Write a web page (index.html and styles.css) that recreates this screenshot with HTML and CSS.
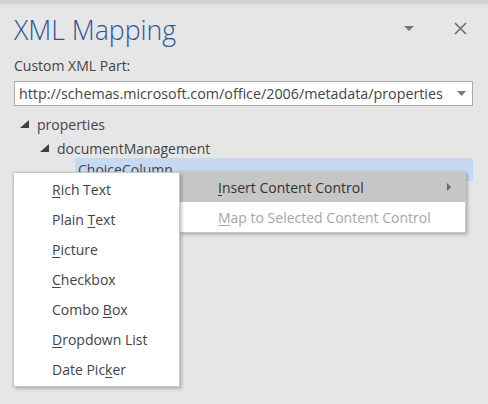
FILE: index.html
```html
<!DOCTYPE html>
<html>
<head>
<meta charset="utf-8">
<link rel="stylesheet" href="styles.css">
</head>
<body>
<div class="pane">
  <div class="topshade"></div>
  <div class="header">
    <h1 class="title">XML Mapping</h1>
    <div class="header-icons">
      <svg class="icon-menu" width="10" height="6" viewBox="0 0 10 6"><path d="M0 0H10L5 5Z" fill="#7a7a7a"/></svg>
      <svg class="icon-close" width="13" height="13" viewBox="0 0 13 13"><path d="M1 1L12 12M12 1L1 12" stroke="#6b6b6b" stroke-width="1.5"/></svg>
    </div>
  </div>
  <div class="label">Custom XML Part:</div>
  <div class="select">
    <span class="select-text">http://schemas.microsoft.com/office/2006/metadata/properties</span>
    <svg class="select-arrow" width="9" height="5" viewBox="0 0 9 5"><path d="M0 0H9L4.5 5Z" fill="#7a7a7a"/></svg>
  </div>
  <ul class="tree">
    <li class="node lvl0"><svg class="twisty" width="9" height="8" viewBox="0 0 9 8"><path d="M9 0V8H0Z" fill="#404040"/></svg><span>properties</span></li>
    <li class="node lvl1"><svg class="twisty" width="9" height="8" viewBox="0 0 9 8"><path d="M9 0V8H0Z" fill="#404040"/></svg><span>documentManagement</span></li>
    <li class="node lvl2 selected"><span>ChoiceColumn</span></li>
  </ul>

  <div class="menu main-menu">
    <div class="item hot"><span><u>I</u>nsert Content Control</span><svg class="sub-arrow" width="4" height="8" viewBox="0 0 4 8"><path d="M0 0L4 4L0 8Z" fill="#666"/></svg></div>
    <div class="item disabled"><span><u>M</u>ap to Selected Content Control</span></div>
  </div>

  <div class="menu sub-menu">
    <div class="item"><span><u>R</u>ich Text</span></div>
    <div class="item"><span>Plain <u>T</u>ext</span></div>
    <div class="item"><span><u>P</u>icture</span></div>
    <div class="item"><span><u>C</u>heckbox</span></div>
    <div class="item"><span>Combo <u>B</u>ox</span></div>
    <div class="item"><span><u>D</u>ropdown List</span></div>
    <div class="item"><span>Date Pic<u>k</u>er</span></div>
  </div>
</div>
</body>
</html>
```

FILE: styles.css
```css
* { box-sizing: border-box; }
html, body {
  margin: 0;
  padding: 0;
  width: 488px;
  height: 404px;
  overflow: hidden;
  background: #e6e6e6;
  font-family: "Open Sans", "Noto Sans", sans-serif;
  color: #444;
}
.pane {
  position: relative;
  width: 488px;
  height: 404px;
  padding: 0 15px 0 14px;
}
.topshade {
  position: absolute;
  left: 0; top: 0; right: 0;
  height: 7px;
  background: linear-gradient(#d6d6d6 0px, #cdcdcd 2px, #dcdcdc 4px, #e6e6e6 7px);
}
.header {
  display: flex;
  align-items: flex-start;
  justify-content: space-between;
  padding-top: 12px;
  height: 56px;
}
.title {
  margin: 0;
  font-family: "Open Sans", sans-serif;
  font-weight: 300;
  font-size: 26.6px;
  line-height: 36px;
  color: #2b579a;
}
.header-icons {
  display: flex;
  align-items: center;
  gap: 40px;
  padding-top: 10px;
  padding-right: 6px;
}
.icon-menu { margin-top: 1px; }
.label {
  font-size: 14px;
  line-height: 20px;
  color: #444;
  height: 25px;
}
.select {
  display: flex;
  align-items: center;
  justify-content: space-between;
  width: 459px;
  height: 25px;
  background: #fff;
  border: 1px solid #ababab;
  padding: 0 6px 0 4px;
  font-size: 14.3px;
  color: #444;
}
.select-text { white-space: nowrap; }
.tree {
  list-style: none;
  margin: 6px 0 0 0;
  padding: 0;
}
.node {
  display: flex;
  align-items: center;
  height: 24px;
  font-size: 14px;
  color: #444;
  white-space: nowrap;
}
.twisty { margin-right: 8px; flex: none; }
.lvl0 { padding-left: 6px; }
.lvl1 { padding-left: 26px; }
.lvl2 {
  margin-top: -2px;
  margin-left: 61px;
  padding-left: 3px;
  height: 23px;
}
.selected { background: #c5d9f1; }

.menu {
  position: absolute;
  background: #fff;
  border: 1px solid #c8c8c8;
  box-shadow: 2px 2px 3px rgba(0,0,0,0.22), -1px 0 2px rgba(0,0,0,0.08);
  font-size: 14px;
  color: #444;
}
.item {
  display: flex;
  align-items: center;
  height: 30px;
  white-space: nowrap;
}
.item u { text-decoration-thickness: 1px; text-underline-offset: 2px; }
.main-menu {
  left: 179px;
  top: 171px;
  width: 287px;
}
.main-menu .item { padding-left: 38px; padding-right: 14px; justify-content: space-between; }
.main-menu .hot { background: #c6c6c6; color: #333; }
.main-menu .disabled { color: #a6a6a6; }
.sub-menu {
  left: 13px;
  top: 172px;
  width: 167px;
  padding: 1px 0 2px;
}
.sub-menu .item { padding-left: 38px; }
```
